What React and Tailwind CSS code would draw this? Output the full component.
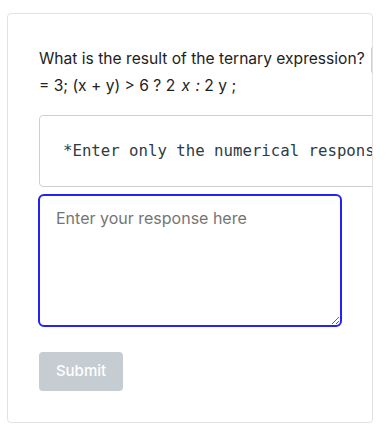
import React from "react";

const App = () => {
  return (
    <div className="min-h-screen bg-white pt-[13px] pl-[7px] font-['Inter',sans-serif]">
      <div className="w-[366px] h-[410px] border border-[#e2e2e2] rounded-[4px] overflow-hidden px-[31px] pt-[31px] bg-white">
        {/* Question */}
        <div className="text-[15.6px] leading-[27px] text-[#222] whitespace-nowrap">
          <p>
            What is the result of the ternary expression?
            <span className="inline-block align-middle ml-[6px] -my-[6px] w-16 h-[30px] border border-[#d0d0d0] rounded-[4px]"></span>
          </p>
          <p>
            = 3; (x + y) &gt; 6 ? 2 <i className="ml-[2px] mr-[1px]">x</i> <i>:</i> 2 y ;
          </p>
        </div>

        {/* Hint */}
        <div className="mt-[16px] w-[360px] h-[72px] border border-[#cfcfcf] rounded-[4px] flex items-center px-[23px] overflow-hidden">
          <span className="font-['DejaVu_Sans_Mono',monospace] text-[15.7px] text-[#2d3b45] whitespace-nowrap">
            *Enter only the numerical response
          </span>
        </div>

        {/* Response */}
        <textarea
          className="mt-[7px] block w-[304px] h-[133px] -ml-[1px] border-2 border-[#2323f2] rounded-[6px] px-4 py-[10px] text-[16px] leading-[24px] text-[#333] placeholder:text-[#757575] outline-none resize-y"
          placeholder="Enter your response here"
        />

        <button
          disabled
          className="mt-[25px] w-[84px] h-[39px] rounded-[4px] bg-[#c5ccd2] text-white text-[15px] font-medium"
        >
          Submit
        </button>
      </div>
    </div>
  );
};

export default App;
